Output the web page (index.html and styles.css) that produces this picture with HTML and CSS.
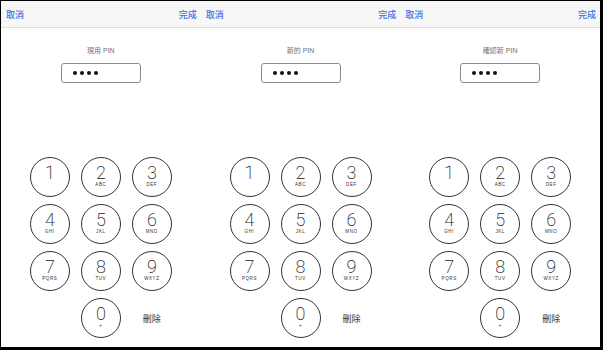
FILE: index.html
```html
<!DOCTYPE html>
<html lang="zh-Hant">
<head>
<meta charset="utf-8">
<link rel="stylesheet" href="styles.css">
</head>
<body>
<div class="frame">
  <section class="panel">
    <header class="bar"><span class="btn">取消</span><span class="btn">完成</span></header>
    <div class="label">現用 PIN</div>
    <div class="field"><i></i><i></i><i></i><i></i></div>
    <div class="pad">
      <div class="key"><span class="d">1</span></div>
      <div class="key"><span class="d">2</span><span class="l">ABC</span></div>
      <div class="key"><span class="d">3</span><span class="l">DEF</span></div>
      <div class="key"><span class="d">4</span><span class="l">GHI</span></div>
      <div class="key"><span class="d">5</span><span class="l">JKL</span></div>
      <div class="key"><span class="d">6</span><span class="l">MNO</span></div>
      <div class="key"><span class="d">7</span><span class="l">PQRS</span></div>
      <div class="key"><span class="d">8</span><span class="l">TUV</span></div>
      <div class="key"><span class="d">9</span><span class="l">WXYZ</span></div>
      <div class="key zero"><span class="d">0</span><span class="l">+</span></div>
      <div class="del">刪除</div>
    </div>
  </section>
  <section class="panel">
    <header class="bar"><span class="btn">取消</span><span class="btn">完成</span></header>
    <div class="label">新的 PIN</div>
    <div class="field"><i></i><i></i><i></i><i></i></div>
    <div class="pad">
      <div class="key"><span class="d">1</span></div>
      <div class="key"><span class="d">2</span><span class="l">ABC</span></div>
      <div class="key"><span class="d">3</span><span class="l">DEF</span></div>
      <div class="key"><span class="d">4</span><span class="l">GHI</span></div>
      <div class="key"><span class="d">5</span><span class="l">JKL</span></div>
      <div class="key"><span class="d">6</span><span class="l">MNO</span></div>
      <div class="key"><span class="d">7</span><span class="l">PQRS</span></div>
      <div class="key"><span class="d">8</span><span class="l">TUV</span></div>
      <div class="key"><span class="d">9</span><span class="l">WXYZ</span></div>
      <div class="key zero"><span class="d">0</span><span class="l">+</span></div>
      <div class="del">刪除</div>
    </div>
  </section>
  <section class="panel">
    <header class="bar"><span class="btn">取消</span><span class="btn">完成</span></header>
    <div class="label">確認新 PIN</div>
    <div class="field"><i></i><i></i><i></i><i></i></div>
    <div class="pad">
      <div class="key"><span class="d">1</span></div>
      <div class="key"><span class="d">2</span><span class="l">ABC</span></div>
      <div class="key"><span class="d">3</span><span class="l">DEF</span></div>
      <div class="key"><span class="d">4</span><span class="l">GHI</span></div>
      <div class="key"><span class="d">5</span><span class="l">JKL</span></div>
      <div class="key"><span class="d">6</span><span class="l">MNO</span></div>
      <div class="key"><span class="d">7</span><span class="l">PQRS</span></div>
      <div class="key"><span class="d">8</span><span class="l">TUV</span></div>
      <div class="key"><span class="d">9</span><span class="l">WXYZ</span></div>
      <div class="key zero"><span class="d">0</span><span class="l">+</span></div>
      <div class="del">刪除</div>
    </div>
  </section>
</div>
</body>
</html>
```
FILE: styles.css
```css
html, body {
  margin: 0;
  padding: 0;
  background: #000;
}
.frame {
  width: 603px;
  height: 350px;
  box-sizing: border-box;
  border-style: solid;
  border-color: #000;
  border-width: 1px 3px 3px 1px;
  background: #fff;
  display: flex;
  font-family: "Liberation Sans", "Noto Sans CJK TC", sans-serif;
}
.panel {
  flex: 1 1 0;
  display: flex;
  flex-direction: column;
  align-items: center;
}
.bar {
  align-self: stretch;
  height: 25px;
  background: #f7f7f7;
  border-bottom: 1px solid #dcdcdc;
  display: flex;
  justify-content: space-between;
  align-items: center;
  padding: 1px 4px 0 5px;
}
.btn {
  font-family: "Noto Sans CJK TC", sans-serif;
  font-size: 9px;
  font-weight: 500;
  color: #3d74e6;
}
.label {
  margin-top: 18px;
  font-family: "Liberation Sans", "Noto Sans CJK TC", sans-serif;
  font-size: 7px;
  line-height: 10px;
  color: #707070;
}
.field {
  margin-top: 7px;
  width: 80px;
  height: 20px;
  box-sizing: border-box;
  border: 1px solid #8a8a8a;
  border-radius: 3px;
  display: flex;
  align-items: center;
  gap: 3px;
  padding-left: 11px;
}
.field i {
  width: 4px;
  height: 4px;
  border-radius: 50%;
  background: #111;
}
.pad {
  margin-top: 74px;
  display: grid;
  grid-template-columns: repeat(3, 40px);
  grid-auto-rows: 40px;
  column-gap: 11px;
  row-gap: 7px;
}
.key {
  box-sizing: border-box;
  border: 1px solid #333;
  border-radius: 50%;
  display: flex;
  flex-direction: column;
  align-items: center;
  justify-content: flex-start;
  padding-top: 6px;
  color: #222;
}
.d {
  font-family: Roboto, "Liberation Sans", sans-serif;
  font-weight: 200;
  font-size: 18px;
  line-height: 18px;
}
.l {
  font-family: "Liberation Sans", sans-serif;
  font-size: 4.5px;
  line-height: 6px;
  letter-spacing: 0.6px;
  color: #333;
}
.zero {
  grid-column: 2;
}
.del {
  display: flex;
  align-items: center;
  justify-content: center;
  font-family: "Noto Sans CJK TC", sans-serif;
  font-size: 9px;
  color: #333;
}
```
